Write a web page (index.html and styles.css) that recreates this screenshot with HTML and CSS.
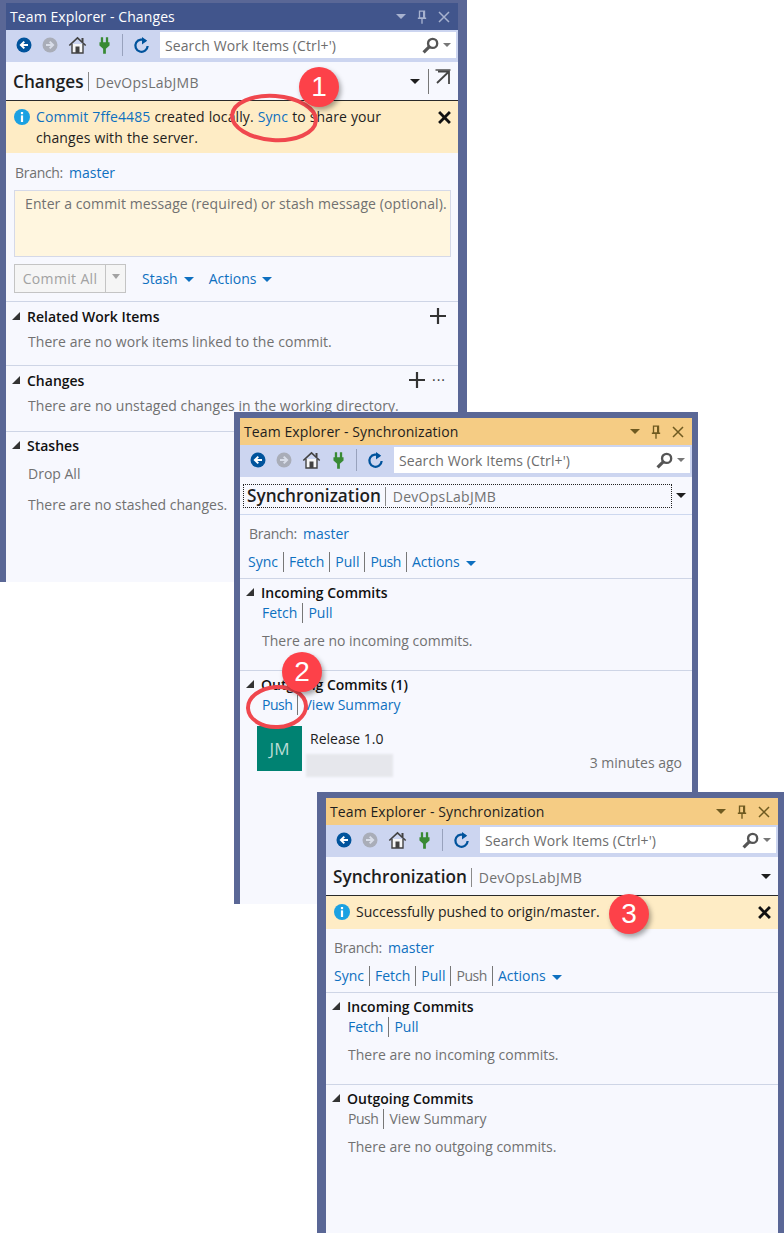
FILE: index.html
```html
<!DOCTYPE html>
<html lang="en">
<head>
<meta charset="utf-8">
<title>Team Explorer</title>
<link rel="stylesheet" href="styles.css">
</head>
<body>
<svg class="defs" width="0" height="0" aria-hidden="true">
  <symbol id="i-back" viewBox="0 0 16 16"><circle cx="8" cy="8" r="7.5" fill="#00539c"/><path d="M12 8H5.5M8.3 4.6 4.9 8l3.4 3.4" fill="none" stroke="#fff" stroke-width="2"/></symbol>
  <symbol id="i-fwd" viewBox="0 0 16 16"><circle cx="8" cy="8" r="7.5" fill="#a9adb8"/><path d="M4 8h6.5M7.700 4.600 11.100 8l-3.400 3.400" fill="none" stroke="#d9dee9" stroke-width="2"/></symbol>
  <symbol id="i-home" viewBox="0 0 18 18"><path d="M.8 9.500 9 1.800l8.200 7.700" fill="none" stroke="#424242" stroke-width="1.600"/><path d="M3.500 8v9h11V8" fill="#f6f6f6" stroke="#424242" stroke-width="1.400"/><rect x="7" y="10.500" width="4" height="6.500" fill="#424242"/><rect x="13" y="2" width="2" height="4" fill="#424242"/></symbol>
  <symbol id="i-plug" viewBox="0 0 12 18"><path d="M2 0h2.500v5.500h3V0H10v5.500h1.500V9l-4 3.500V18h-3v-5.500L.5 9V5.500H2z" fill="#388a34"/></symbol>
  <symbol id="i-refresh" viewBox="0 0 18 18"><path d="M13.600 5.100A6.500 6.500 0 1 0 15.500 10" fill="none" stroke="#00539c" stroke-width="2.400"/><path d="M9.500 0.500v8l5.500-4z" fill="#00539c"/></symbol>
  <symbol id="i-search" viewBox="0 0 16 16"><circle cx="10" cy="6" r="4.300" fill="none" stroke="#555" stroke-width="2.200"/><path d="M7 9 1.500 14.500" stroke="#555" stroke-width="3"/></symbol>
  <symbol id="i-pin" viewBox="0 0 12 16"><path d="M3 1h6v8H3zM1 9.500h10M6 10v6M8 1.500v7" fill="none" stroke="currentColor" stroke-width="1.600"/></symbol>
  <symbol id="i-x" viewBox="0 0 12 12"><path d="M1 1l10 10M11 1 1 11" fill="none" stroke="currentColor" stroke-width="1.500"/></symbol>
  <symbol id="i-xb" viewBox="0 0 12 12"><path d="M1 1l10 10M11 1 1 11" fill="none" stroke="#111" stroke-width="2.600"/></symbol>
  <symbol id="i-info" viewBox="0 0 16 16"><circle cx="8" cy="8" r="8" fill="#1ba1e2"/><rect x="6.900" y="3" width="2.200" height="2.200" fill="#fff"/><rect x="6.900" y="6.400" width="2.200" height="6.600" fill="#fff"/></symbol>
  <symbol id="i-plus" viewBox="0 0 16 16"><path d="M8 0v16M0 8h16" stroke="#333" stroke-width="2.200"/></symbol>
  <symbol id="i-popout" viewBox="0 0 16 16"><path d="M.5 1h15" stroke="#444" stroke-width="1.400"/><path d="M14 15V2.500H3M14 2.500 2 14" fill="none" stroke="#444" stroke-width="1.800"/></symbol>
</svg>

<section class="win win-one">
  <div class="frame">
    <header class="title title-dark">
      <span class="title-text">Team Explorer - Changes</span>
      <span class="title-btns"><i class="tri-down"></i><svg class="ic-pin"><use href="#i-pin"/></svg><svg class="ic-x"><use href="#i-x"/></svg></span>
    </header>
    <div class="toolbar">
      <svg class="tb-back"><use href="#i-back"/></svg><svg class="tb-fwd"><use href="#i-fwd"/></svg><svg class="tb-home"><use href="#i-home"/></svg><svg class="tb-plug"><use href="#i-plug"/></svg><span class="tb-sep"></span><svg class="tb-refresh"><use href="#i-refresh"/></svg>
      <div class="search"><span class="search-text">Search Work Items (Ctrl+')</span><svg class="ic-search"><use href="#i-search"/></svg><i class="tri-small"></i></div>
    </div>
    <div class="pane">
      <div class="head head-strong">
        <span class="head-title">Changes</span><span class="head-bar"></span><span class="head-sub">DevOpsLabJMB</span>
        <span class="head-end"><i class="tri-black"></i><span class="head-sep"></span><svg class="ic-popout"><use href="#i-popout"/></svg></span>
      </div>
      <div class="notice notice-tall">
        <svg class="ic-info"><use href="#i-info"/></svg>
        <p class="notice-text notice-wrap"><a class="link">Commit 7ffe4485</a> created locally. <a class="link">Sync</a> to share your changes with the server.</p>
        <svg class="ic-xb"><use href="#i-xb"/></svg>
      </div>
      <div class="branch branch-one"><span class="muted">Branch:</span><a class="link">master</a></div>
      <div class="commit-box">Enter a commit message (required) or stash message (optional).</div>
      <div class="commit-row">
        <div class="split"><span class="split-main">Commit All</span><span class="split-arrow"><i class="tri-gray"></i></span></div>
        <a class="link menu-link stash">Stash <i class="caret"></i></a>
        <a class="link menu-link">Actions <i class="caret"></i></a>
      </div>
      <div class="sec sec-rel">
        <div class="sec-head"><i class="expander"></i><span class="sec-title">Related Work Items</span><svg class="ic-plus plus-one"><use href="#i-plus"/></svg></div>
        <p class="sec-note">There are no work items linked to the commit.</p>
      </div>
      <div class="sec sec-chg">
        <div class="sec-head"><i class="expander"></i><span class="sec-title">Changes</span><svg class="ic-plus plus-two"><use href="#i-plus"/></svg><span class="dots">···</span></div>
        <p class="sec-note">There are no unstaged changes in the working directory.</p>
      </div>
      <div class="sec sec-sta">
        <div class="sec-head"><i class="expander"></i><span class="sec-title">Stashes</span></div>
        <a class="drop-all">Drop All</a>
        <p class="sec-note note-stash">There are no stashed changes.</p>
      </div>
    </div>
  </div>
</section>

<section class="win win-two">
  <div class="frame">
    <header class="title title-gold">
      <span class="title-text">Team Explorer - Synchronization</span>
      <span class="title-btns"><i class="tri-down"></i><svg class="ic-pin"><use href="#i-pin"/></svg><svg class="ic-x"><use href="#i-x"/></svg></span>
    </header>
    <div class="toolbar">
      <svg class="tb-back"><use href="#i-back"/></svg><svg class="tb-fwd"><use href="#i-fwd"/></svg><svg class="tb-home"><use href="#i-home"/></svg><svg class="tb-plug"><use href="#i-plug"/></svg><span class="tb-sep"></span><svg class="tb-refresh"><use href="#i-refresh"/></svg>
      <div class="search"><span class="search-text">Search Work Items (Ctrl+')</span><svg class="ic-search"><use href="#i-search"/></svg><i class="tri-small"></i></div>
    </div>
    <div class="pane">
      <div class="head head-light">
        <div class="focus-box"><span class="head-title">Synchronization</span><span class="head-bar"></span><span class="head-sub">DevOpsLabJMB</span></div>
        <i class="tri-black"></i>
      </div>
      <div class="branch branch-sync"><span class="muted">Branch:</span><a class="link">master</a></div>
      <div class="actions"><a class="link">Sync</a><a class="link">Fetch</a><a class="link">Pull</a><a class="link">Push</a><a class="link menu-link">Actions <i class="caret"></i></a></div>
      <div class="sec sec-in">
        <div class="sec-head"><i class="expander"></i><span class="sec-title">Incoming Commits</span></div>
        <div class="sub-actions"><a class="link">Fetch</a><a class="link">Pull</a></div>
        <p class="sec-note note-sync">There are no incoming commits.</p>
      </div>
      <div class="sec sec-out">
        <div class="sec-head"><i class="expander"></i><span class="sec-title">Outgoing Commits (1)</span></div>
        <div class="sub-actions"><a class="link push-sub">Push</a><a class="link">View Summary</a></div>
        <div class="commit">
          <div class="avatar">JM</div>
          <div class="commit-body">
            <span class="commit-msg">Release 1.0</span>
            <div class="commit-meta"><span class="blur"></span><span class="when">3 minutes ago</span></div>
          </div>
        </div>
      </div>
    </div>
  </div>
</section>

<section class="win win-three">
  <div class="frame">
    <header class="title title-gold">
      <span class="title-text">Team Explorer - Synchronization</span>
      <span class="title-btns"><i class="tri-down"></i><svg class="ic-pin"><use href="#i-pin"/></svg><svg class="ic-x"><use href="#i-x"/></svg></span>
    </header>
    <div class="toolbar">
      <svg class="tb-back"><use href="#i-back"/></svg><svg class="tb-fwd"><use href="#i-fwd"/></svg><svg class="tb-home"><use href="#i-home"/></svg><svg class="tb-plug"><use href="#i-plug"/></svg><span class="tb-sep"></span><svg class="tb-refresh"><use href="#i-refresh"/></svg>
      <div class="search"><span class="search-text">Search Work Items (Ctrl+')</span><svg class="ic-search"><use href="#i-search"/></svg><i class="tri-small"></i></div>
    </div>
    <div class="pane">
      <div class="head head-strong head-three">
        <span class="head-title">Synchronization</span><span class="head-bar"></span><span class="head-sub">DevOpsLabJMB</span>
        <i class="tri-black tri-end"></i>
      </div>
      <div class="notice notice-short">
        <svg class="ic-info"><use href="#i-info"/></svg>
        <p class="notice-text">Successfully pushed to origin/master.</p>
        <svg class="ic-xb"><use href="#i-xb"/></svg>
      </div>
      <div class="branch branch-three"><span class="muted">Branch:</span><a class="link">master</a></div>
      <div class="actions"><a class="link">Sync</a><a class="link">Fetch</a><a class="link">Pull</a><a class="muted">Push</a><a class="link menu-link">Actions <i class="caret"></i></a></div>
      <div class="sec sec-in">
        <div class="sec-head"><i class="expander"></i><span class="sec-title">Incoming Commits</span></div>
        <div class="sub-actions"><a class="link">Fetch</a><a class="link">Pull</a></div>
        <p class="sec-note note-sync">There are no incoming commits.</p>
      </div>
      <div class="sec sec-out">
        <div class="sec-head"><i class="expander"></i><span class="sec-title">Outgoing Commits</span></div>
        <div class="sub-actions"><a class="muted push-sub">Push</a><a class="muted">View Summary</a></div>
        <p class="sec-note note-sync">There are no outgoing commits.</p>
      </div>
    </div>
  </div>
</section>

<svg class="rings" width="784" height="1233" aria-hidden="true">
  <ellipse cx="274" cy="118" rx="42" ry="22" transform="rotate(4 274 118)"/>
  <ellipse cx="277" cy="707" rx="29" ry="20" transform="rotate(-3 277 707)"/>
</svg>
<div class="badge badge-one">1</div>
<div class="badge badge-two">2</div>
<div class="badge badge-three">3</div>
</body>
</html>
```
FILE: styles.css
```css
* { box-sizing: border-box; }
html, body { margin: 0; padding: 0; }
body {
  width: 784px; height: 1233px; position: relative; overflow: hidden;
  background: #fff; font-family: "Open Sans", "Liberation Sans", sans-serif;
  font-size: 14px; color: #1e1e1e;
}
.defs { position: absolute; }
svg { display: block; flex: none; }
i { display: inline-block; }
p { margin: 0; }

.win { position: absolute; background: #5a6796; overflow: hidden; }
.win-one { left: 0; top: 0; width: 467px; height: 582px; padding: 3px 9px 0 6px; }
.win-two { left: 234px; top: 412px; width: 464px; height: 492px; padding: 6px 6px 0; }
.win-three { left: 317px; top: 792px; width: 467px; height: 441px; padding: 6px 6px 0 9px; }
.frame { height: 100%; display: flex; flex-direction: column; background: #f7f8fe; }

.title { height: 27px; flex: none; display: flex; align-items: center; justify-content: space-between; padding: 0 8px 0 4px; font-size: 14px; letter-spacing: .1px; }
.title-dark { background: #41558c; color: #fff; }
.title-dark .title-btns { color: #a7b2cf; }
.title-gold { background: #f5cc84; color: #1e1e1e; }
.title-gold .title-btns { color: #6f5a20; }
.title-btns { display: flex; align-items: center; gap: 11px; }
.tri-down { width: 0; height: 0; border: 5px solid transparent; border-top: 5px solid currentColor; border-bottom: 0; }
.ic-pin { width: 10px; height: 14px; }
.ic-x { width: 12px; height: 12px; }

.toolbar { height: 32px; flex: none; display: flex; align-items: center; background: #ccd5f0; padding: 0 0 2px 10px; }
.tb-back { width: 16px; height: 16px; }
.tb-fwd { width: 16px; height: 16px; margin-left: 10px; }
.tb-home { width: 19px; height: 18px; margin-left: 10px; }
.tb-plug { width: 11px; height: 17px; margin-left: 12px; }
.tb-sep { width: 1px; height: 22px; background: #98a2bd; margin-left: 12px; }
.tb-refresh { width: 17px; height: 18px; margin-left: 10px; }
.search { width: 296px; height: 26px; margin-left: 10px; background: #fff; display: flex; align-items: center; padding: 0 5px; flex: none; }
.search-text { flex: 1; color: #6d6d6d; white-space: nowrap; letter-spacing: .1px; }
.ic-search { width: 17px; height: 17px; margin-right: 4px; }
.tri-small { width: 0; height: 0; border: 4px solid transparent; border-top: 4px solid #777; border-bottom: 0; }

.pane { flex: 1; min-height: 0; background: #f7f8fe; }
.head { display: flex; align-items: center; height: 38px; }
.head-strong { border-bottom: 1px solid #2a2a2a; height: 39px; padding: 0 7px; }
.head-three { padding-top: 1px; }
.head-title { font-size: 17.200px; font-weight: 600; color: #1e1e1e; white-space: nowrap; }
.head-bar { width: 1px; height: 19px; background: #8a8a8a; margin: 1px 7px 0 4px; }
.head-sub { font-size: 14px; color: #717171; margin-top: 2px; letter-spacing: .25px; }
.head-end { margin-left: auto; display: flex; align-items: center; }
.tri-black { width: 0; height: 0; border: 5px solid transparent; border-top: 5px solid #1e1e1e; border-bottom: 0; }
.head-sep { width: 1px; height: 25px; background: #777; margin: 0 6px 0 8px; }
.ic-popout { width: 16px; height: 16px; margin-top: -8px; }
.tri-end { margin-left: auto; }
.head-light { height: 38px; border-bottom: 1px solid #cdd8ef; padding: 0 6px 0 3px; }
.focus-box { width: 429px; height: 24px; border: 1px dotted #222; display: flex; align-items: center; padding-left: 3px; margin-right: 4px; }

.notice { background: #feecc5; display: flex; align-items: flex-start; }
.notice-tall { height: 52px; padding: 7px 7px 0 8px; }
.notice-short { height: 33px; padding: 7px 7px 0 8px; }
.ic-info { width: 16px; height: 16px; margin: 1px 6px 0 0; }
.notice-text { flex: 1; line-height: 21px; color: #1e1e1e; margin-top: -2px; }
.notice-wrap { letter-spacing: .1px; word-spacing: .3px; padding-right: 50px; }
.ic-xb { width: 13px; height: 13px; margin-top: 3px; }

.link { color: #0e70c0; white-space: nowrap; }
.muted { color: #717171; white-space: nowrap; }

.branch { display: flex; gap: 6px; height: 20px; align-items: center; padding-left: 9px; }
.branch > .muted { letter-spacing: -.3px; }
.branch-one { margin-top: 9px; }
.branch-sync { margin-top: 8px; }
.branch-three { margin-top: 8px; padding-left: 8px; }

.commit-box { margin: 8px 7px 0 8px; height: 67px; background: #fff6df; border: 1px solid #d5d9e8; padding: 3px 10px; color: #717171; white-space: nowrap; line-height: 19px; letter-spacing: .1px; }
.commit-row { display: flex; align-items: center; height: 29px; margin-top: 7px; padding-left: 8px; }
.split { display: flex; width: 112px; height: 29px; border: 1px solid #c4c4c4; background: #f5f5f5; color: #a2a2a2; }
.split-main { width: 91px; text-align: center; line-height: 27px; border-right: 1px solid #c4c4c4; letter-spacing: .35px; }
.split-arrow { flex: 1; display: flex; align-items: center; justify-content: center; }
.tri-gray { width: 0; height: 0; border: 4px solid transparent; border-top: 5px solid #a2a2a2; border-bottom: 0; margin-bottom: 4px; }
.menu-link { display: inline-flex; align-items: center; gap: 6px; }
.stash { margin-left: 16px; margin-right: 15px; }
.caret { width: 0; height: 0; border: 5px solid transparent; border-top: 5px solid #0e70c0; border-bottom: 0; margin-top: 2px; }

.sec { border-top: 1px solid #ced5e6; }
.sec-head { display: flex; align-items: center; height: 20px; padding-left: 6px; }
.expander { width: 0; height: 0; border-style: solid; border-width: 0 0 8px 8px; border-color: transparent transparent #333 transparent; flex: none; margin-top: -2px; }
.sec-title { margin: -2px 0 0 7px; color: #111; font-weight: 600; font-size: 14px; white-space: nowrap; }
.sec-note { color: #717171; white-space: nowrap; margin-left: 22px; }
.sec-rel { margin-top: 8px; height: 64px; padding-top: 5px; }
.sec-rel .sec-note, .sec-chg .sec-note { margin-top: 5px; letter-spacing: .06px; }
.sec-chg { height: 66px; padding-top: 5px; }
.sec-sta { padding-top: 4px; }
.ic-plus { width: 16px; height: 16px; margin-top: -2px; }
.plus-one { margin-left: auto; margin-right: 12px; }
.plus-two { margin-left: auto; }
.dots { margin: -3px 12px 0 7px; color: #333; width: 14px; line-height: 14px; letter-spacing: 1px; }
.drop-all { display: block; color: #717171; margin: 8px 0 0 22px; }
.note-stash { margin-top: 12px; }

.actions { display: flex; height: 20px; margin-top: 9px; padding-left: 8px; align-items: center; }
.actions > * { padding: 0 5px; border-left: 1px solid #777; line-height: 20px; }
.actions > *:first-child { border-left: 0; padding-left: 0; }
.actions > *:nth-child(4) { letter-spacing: -.45px; }
.sec-in { margin-top: 6px; height: 92px; padding-top: 4px; }
.sec-out { padding-top: 4px; }
.sub-actions { display: flex; margin-left: 22px; height: 20px; align-items: center; }
.sub-actions > * { padding: 0 5px; border-left: 1px solid #777; line-height: 20px; }
.sub-actions > *:first-child { border-left: 0; padding-left: 0; }
.push-sub { letter-spacing: -.45px; }
.note-sync { margin-top: 8px; }
.commit { display: flex; margin: 11px 10px 0 17px; }
.avatar { width: 45px; height: 45px; background: #008272; color: #b9dcd5; display: flex; align-items: center; justify-content: center; font-size: 17px; flex: none; }
.commit-body { flex: 1; margin-left: 4px; }
.commit-msg { margin-left: 4px; color: #1e1e1e; display: block; line-height: 26px; }
.commit-meta { display: flex; justify-content: space-between; align-items: flex-end; margin-top: -1px; }
.blur { width: 87px; height: 23px; background: #e6e7ec; filter: blur(1px); }
.when { color: #717171; line-height: 24px; margin-bottom: 2px; }

.rings { position: absolute; left: 0; top: 0; fill: none; stroke: #f0474e; stroke-width: 4px; pointer-events: none; }
.badge { position: absolute; width: 40px; height: 40px; border-radius: 50%; background: #fd4149; color: #fff; font-size: 28px; line-height: 40px; text-align: center; box-shadow: 2px 3px 5px rgba(0,0,0,.35); font-family: "Liberation Sans", sans-serif; }
.badge-one { left: 299px; top: 67px; }
.badge-two { left: 282px; top: 652px; }
.badge-three { left: 609px; top: 894px; }
```
